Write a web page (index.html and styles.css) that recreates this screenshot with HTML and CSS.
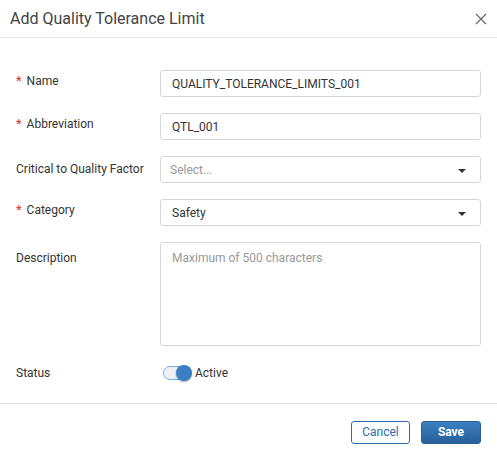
FILE: index.html
```html
<!DOCTYPE html>
<html lang="en">
<head>
    <meta charset="UTF-8">
    <meta name="viewport" content="width=device-width, initial-scale=1.0">
    <title>Add Quality Tolerance Limit</title>
    <link rel="stylesheet" href="styles.css">
</head>
<body>
    <div class="dialog">
        <div class="dialog-header">
            <h2>Add Quality Tolerance Limit</h2>
            <button class="close-btn" type="button" aria-label="Close">
                <svg width="12" height="12" viewBox="0 0 12 12">
                    <path d="M1 1 L11 11 M11 1 L1 11" stroke="#666" stroke-width="1.2" fill="none"/>
                </svg>
            </button>
        </div>

        <form class="dialog-body" id="qtl-form">
            <label class="field-label required" for="name">Name</label>
            <input class="field-input" type="text" id="name" value="QUALITY_TOLERANCE_LIMITS_001">

            <label class="field-label required" for="abbr">Abbreviation</label>
            <input class="field-input" type="text" id="abbr" value="QTL_001">

            <label class="field-label ctq-label" for="ctq">Critical to Quality Factor</label>
            <div class="field-input select placeholder" id="ctq">
                <span>Select...</span>
                <span class="caret"></span>
            </div>

            <label class="field-label required" for="category">Category</label>
            <div class="field-input select" id="category">
                <span>Safety</span>
                <span class="caret"></span>
            </div>

            <label class="field-label desc-label" for="description">Description</label>
            <textarea class="field-input textarea" id="description" placeholder="Maximum of 500 characters"></textarea>

            <span class="field-label status-label">Status</span>
            <div class="status">
                <span class="toggle"><span class="knob"></span></span>
                <span>Active</span>
            </div>
        </form>

        <div class="dialog-footer">
            <button class="btn btn-cancel" type="button">Cancel</button>
            <button class="btn btn-save" type="submit" form="qtl-form">Save</button>
        </div>
    </div>
</body>
</html>
```

FILE: styles.css
```css
body {
    margin: 0;
    font-family: Roboto, "Liberation Sans", Arial, sans-serif;
    color: #333;
    background: #fff;
}
.dialog {
    width: 497px;
    height: 460px;
    display: flex;
    flex-direction: column;
}
.dialog-header {
    height: 38px;
    box-sizing: border-box;
    border-bottom: 1px solid #e5e5e5;
    display: flex;
    align-items: center;
    justify-content: space-between;
    padding: 0 10px;
}
.dialog-header h2 {
    margin: 0;
    font-size: 16px;
    font-weight: 400;
    color: #444;
}
.close-btn {
    background: none;
    border: none;
    padding: 0;
    width: 12px;
    height: 12px;
    cursor: pointer;
    display: flex;
}
.dialog-body {
    display: grid;
    grid-template-columns: 144px 321px;
    grid-template-rows: 27px 27px 27px 27px 104px 22px;
    row-gap: 16px;
    padding: 32px 16px 19px;
    border-bottom: 1px solid #e5e5e5;
}
.field-label {
    font-size: 12px;
    line-height: 16px;
    padding-top: 3px;
}
.field-label.required::before {
    content: "*";
    color: #d9342b;
    font-size: 13px;
    margin-right: 5px;
}
.ctq-label {
    padding-top: 5px;
}
.desc-label {
    padding-top: 8px;
}
.status-label {
    padding-top: 3px;
}
.field-input {
    box-sizing: border-box;
    height: 27px;
    border: 1px solid #d6d6d6;
    border-radius: 3px;
    padding: 0 11px;
    font-family: inherit;
    font-size: 12px;
    color: #333;
    outline: none;
}
.select {
    display: flex;
    align-items: center;
    justify-content: space-between;
}
.placeholder {
    color: #999;
    padding-left: 9px;
}
.caret {
    width: 0;
    height: 0;
    border-left: 4px solid transparent;
    border-right: 4px solid transparent;
    border-top: 4px solid #333;
    margin-right: 3px;
    margin-top: 2px;
}
.textarea {
    height: 104px;
    resize: none;
    padding: 8px 11px;
}
.textarea::placeholder {
    color: #999;
}
.status {
    display: flex;
    align-items: center;
    gap: 5px;
    padding-left: 3px;
    font-size: 12px;
}
.toggle {
    position: relative;
    width: 27px;
    height: 14px;
    box-sizing: border-box;
    border: 1px solid #7aaee0;
    border-radius: 8px;
    background: #eef2f7;
}
.knob {
    position: absolute;
    right: -3px;
    top: -2px;
    width: 16px;
    height: 16px;
    border-radius: 50%;
    background: #3a7fc4;
    box-shadow: 0 1px 2px rgba(0, 0, 0, 0.35);
}
.dialog-footer {
    flex: 1;
    display: flex;
    justify-content: flex-end;
    align-items: center;
    gap: 11px;
    padding: 0 16px;
}
.btn {
    height: 23px;
    border-radius: 3px;
    font-family: inherit;
    font-size: 12px;
    cursor: pointer;
}
.btn-cancel {
    width: 59px;
    background: #fff;
    color: #2a6cb0;
    border: 1px solid #2a6cb0;
}
.btn-save {
    width: 60px;
    color: #fff;
    font-weight: 700;
    border: 1px solid #2a5f96;
    background: linear-gradient(#3b7fc2, #28609a);
}
```
